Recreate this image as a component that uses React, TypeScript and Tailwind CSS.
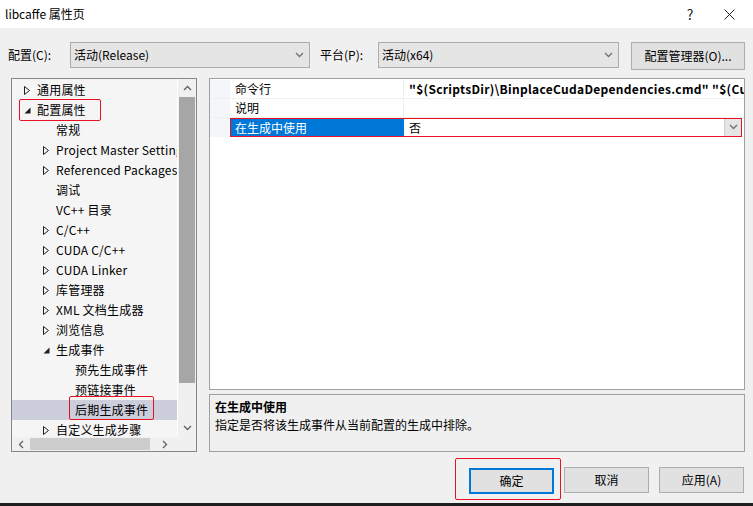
import { FC, ReactNode } from "react";

const font = "font-['Noto_Sans_CJK_SC','Noto_Sans',sans-serif]";

type Node = { label: string; level: number; kind?: "closed" | "open"; selected?: boolean; boxed?: boolean };

const tree: Node[] = [
  { label: "通用属性", level: 1, kind: "closed" },
  { label: "配置属性", level: 1, kind: "open", boxed: true },
  { label: "常规", level: 2 },
  { label: "Project Master Settings", level: 2, kind: "closed" },
  { label: "Referenced Packages", level: 2, kind: "closed" },
  { label: "调试", level: 2 },
  { label: "VC++ 目录", level: 2 },
  { label: "C/C++", level: 2, kind: "closed" },
  { label: "CUDA C/C++", level: 2, kind: "closed" },
  { label: "CUDA Linker", level: 2, kind: "closed" },
  { label: "库管理器", level: 2, kind: "closed" },
  { label: "XML 文档生成器", level: 2, kind: "closed" },
  { label: "浏览信息", level: 2, kind: "closed" },
  { label: "生成事件", level: 2, kind: "open" },
  { label: "预先生成事件", level: 3 },
  { label: "预链接事件", level: 3 },
  { label: "后期生成事件", level: 3, selected: true, boxed: true },
  { label: "自定义生成步骤", level: 2, kind: "closed" },
];

const Chevron: FC<{ dir: "up" | "down" | "left" | "right"; color?: string }> = ({ dir, color = "#606060" }) => {
  const d = {
    down: "M1 2 L4.5 5.5 L8 2",
    up: "M1 6 L4.5 2.5 L8 6",
    left: "M6 1 L2.5 4.5 L6 8",
    right: "M3 1 L6.5 4.5 L3 8",
  }[dir];
  return (
    <svg width="9" height="9" viewBox="0 0 9 9">
      <path d={d} fill="none" stroke={color} strokeWidth="1.3" />
    </svg>
  );
};

const Toggle: FC<{ kind?: "closed" | "open" }> = ({ kind }) => {
  if (kind === "closed")
    return (
      <svg width="6" height="9" viewBox="0 0 6 9">
        <path d="M0.5 0.5 L5.5 4.5 L0.5 8.5 Z" fill="none" stroke="#1e1e1e" strokeWidth="1" />
      </svg>
    );
  if (kind === "open")
    return (
      <svg width="7" height="7" viewBox="0 0 7 7">
        <path d="M6.5 0.5 L6.5 6.5 L0.5 6.5 Z" fill="#1e1e1e" />
      </svg>
    );
  return null;
};

const Combo: FC<{ children: ReactNode; w: string }> = ({ children, w }) => (
  <div className={`${w} h-[26px] border border-[#acacac] bg-[#e5e5e5] flex items-center pl-[3px] pr-[5px]`}>
    <span className="flex-1 text-[12px]">{children}</span>
    <Chevron dir="down" color="#707070" />
  </div>
);

const Btn: FC<{ children: ReactNode; primary?: boolean }> = ({ children, primary }) => (
  <button
    className={`w-[85px] h-[26px] bg-[#e1e1e1] text-[12px] ${
      primary ? "border-2 border-[#0078d7]" : "border border-[#adadad]"
    }`}
  >
    {children}
  </button>
);

export default function App() {
  return (
    <div className={`w-[753px] h-[506px] flex flex-col bg-[#f0f0f0] overflow-hidden text-black ${font}`}>
      {/* title bar */}
      <div className="h-[28px] bg-white flex items-center pl-[5px]">
        <span className="text-[12px]">libcaffe 属性页</span>
        <span className="ml-auto w-[20px] text-center text-[14px] text-[#222]">?</span>
        <span className="ml-[24px] mr-[18px] flex items-center">
          <svg width="11" height="11" viewBox="0 0 11 11">
            <path d="M0.5 0.5 L10.5 10.5 M10.5 0.5 L0.5 10.5" stroke="#222" strokeWidth="1" />
          </svg>
        </span>
      </div>

      {/* config row */}
      <div className="mt-[14px] h-[28px] flex items-start pl-[8px] text-[12px]">
        <span className="w-[62px] h-[26px] flex items-center">配置(C):</span>
        <Combo w="w-[240px]">活动(Release)</Combo>
        <span className="ml-[10px] w-[58px] h-[26px] flex items-center">平台(P):</span>
        <Combo w="w-[241px]">活动(x64)</Combo>
        <button className="ml-[12px] w-[114px] h-[28px] border border-[#adadad] bg-[#e1e1e1] text-[12px]">
          配置管理器(O)...
        </button>
      </div>

      {/* main area */}
      <div className="mt-[8px] h-[374px] flex">
        {/* tree */}
        <div className="ml-[11px] w-[186px] h-full border border-[#828790] bg-[#f0f0f0] flex flex-col">
          <div className="h-[358px] flex">
            <div className="w-[166px] h-full bg-[#f5f5f5] overflow-hidden pt-[1px] border-r border-white">
              {tree.map((n) => (
                <div
                  key={n.label}
                  className={`relative h-[20px] flex items-center whitespace-nowrap text-[12px] tracking-[0.2px] ${
                    n.selected ? "bg-[#cccedb]" : ""
                  }`}
                >
                  <span
                    className={`shrink-0 flex items-center justify-center w-[12px] ${
                      n.level === 1 ? "ml-[9px]" : n.level === 2 ? "ml-[28px]" : "ml-[47px]"
                    }`}
                  >
                    <Toggle kind={n.kind} />
                  </span>
                  <span className="shrink-0 ml-[4px]">{n.label}</span>
                  {n.boxed && (
                    <span
                      className={`absolute border border-[#e81123] rounded-[2px] ${
                        n.level === 1 ? "left-[7px] w-[82px] top-[-1px] h-[22px]" : "left-[57px] w-[85px] top-[-4px] h-[24px]"
                      }`}
                    />
                  )}
                </div>
              ))}
            </div>
            <div className="w-[18px] h-full flex flex-col items-center">
              <div className="h-[18px] flex items-center justify-center">
                <Chevron dir="up" />
              </div>
              <div className="w-[16px] h-[286px] bg-[#a6a6a6]" />
              <div className="flex-1" />
              <div className="h-[18px] flex items-center justify-center">
                <Chevron dir="down" />
              </div>
            </div>
          </div>
          <div className="h-[14px] flex items-center">
            <div className="w-[18px] flex justify-center">
              <Chevron dir="left" />
            </div>
            <div className="w-[120px] h-[12px] bg-[#cdcdcd]" />
            <div className="w-[28px] flex justify-center">
              <Chevron dir="right" />
            </div>
          </div>
        </div>

        {/* right column */}
        <div className="ml-[12px] w-[536px] h-full flex flex-col">
          <div className="h-[312px] border border-[#a0a0a0] bg-white pt-[1px] text-[12px]">
            {[
              { name: "命令行", value: '"$(ScriptsDir)\\BinplaceCudaDependencies.cmd" "$(Cu' },
              { name: "说明", value: "" },
            ].map((r) => (
              <div key={r.name} className="h-[19px] flex border-b border-[#f0f0f0]">
                <div className="w-[20px] bg-[#f5f6f9]" />
                <div className="w-[174px] pl-[5px] flex items-center border-r border-[#f0f0f0]">{r.name}</div>
                <div className="flex-1 pl-[5px] flex items-center font-bold whitespace-nowrap overflow-hidden tracking-[0.3px]">
                  {r.value}
                </div>
              </div>
            ))}
            <div className="h-[19px] flex">
              <div className="w-[20px] bg-[#f5f6f9]" />
              <div className="flex-1 flex border border-[#e81123] mr-[2px]">
                <div className="w-[173px] pl-[4px] flex items-center bg-[#0078d7] text-white">在生成中使用</div>
                <div className="flex-1 pl-[5px] flex items-center">否</div>
                <div className="w-[17px] bg-[#e5e5e5] border-l border-[#cfcfcf] flex items-center justify-center">
                  <Chevron dir="down" color="#707070" />
                </div>
              </div>
            </div>
          </div>
          <div className="mt-[4px] h-[58px] border border-[#a0a0a0] bg-[#f0f0f0] pl-[5px] pt-[3px] text-[12px]">
            <div className="font-bold h-[18px] flex items-center">在生成中使用</div>
            <div className="h-[18px] flex items-center">指定是否将该生成事件从当前配置的生成中排除。</div>
          </div>
        </div>
      </div>

      {/* buttons */}
      <div className="mt-[15px] h-[26px] flex justify-end pr-[9px] gap-[10px]">
        <div className="relative">
          <Btn primary>确定</Btn>
          <span className="absolute left-[-14px] top-[-9px] w-[106px] h-[42px] border border-[#e81123] rounded-[2px]" />
        </div>
        <Btn>取消</Btn>
        <Btn>应用(A)</Btn>
      </div>

      <div className="mt-[10px] h-[3px] bg-[#1e1e1e]" />
    </div>
  );
}
